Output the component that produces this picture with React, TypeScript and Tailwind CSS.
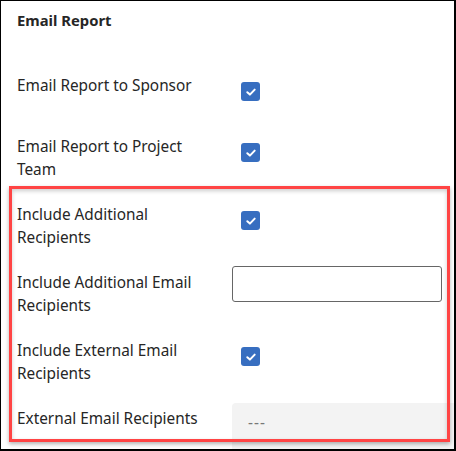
import React from "react";

function Check() {
    return (
        <div className="mt-[8px] ml-[9px] w-[19px] h-[19px] rounded-[3px] bg-[#376ec0] flex items-center justify-center">
            <svg width="12" height="12" viewBox="0 0 12 12" fill="none">
                <path d="M2.3 6.2 L4.9 8.6 L9.7 3.6" stroke="white" strokeWidth="2" strokeLinecap="round" strokeLinejoin="round" />
            </svg>
        </div>
    );
}

function Row({ label, h, children }: { label: string; h: string; children: React.ReactNode }) {
    return (
        <div className={`flex items-start ${h}`}>
            <div className="w-[190px] mr-[25px] shrink-0 leading-[23px]">{label}</div>
            {children}
        </div>
    );
}

export default function App() {
    return (
        <div className="relative w-[456px] h-[451px] overflow-hidden bg-white border-t border-l border-r-2 border-b-2 border-black text-[15.35px] text-[#262626] font-['Noto_Sans','Open_Sans',sans-serif]">
            <div className="pl-4">
                <div className="pt-[8px] h-[73px] font-bold text-[14.8px] leading-[23px]">Email Report</div>
                <Row label="Email Report to Sponsor" h="h-[61px]">
                    <Check />
                </Row>
                <Row label="Email Report to Project Team" h="h-[68px]">
                    <Check />
                </Row>
                <Row label="Include Additional Recipients" h="h-[68px]">
                    <Check />
                </Row>
                <Row label="Include Additional Email Recipients" h="h-[68px]">
                    <input className="-mt-[5px] w-[210px] h-[36px] border border-[#666] rounded-[3px] outline-none px-2" />
                </Row>
                <Row label="Include External Email Recipients" h="h-[68px]">
                    <Check />
                </Row>
                <Row label="External Email Recipients" h="h-[60px]">
                    <div className="-mt-[4px] flex-1 h-[60px] bg-[#f3f3f3] rounded-tl-[4px] pl-4 pt-[8px] text-[#777] tracking-[1px]">---</div>
                </Row>
            </div>
            {/* highlight annotation */}
            <div className="pointer-events-none absolute left-[8px] top-[185px] w-[441px] h-[256px] border-[3px] border-[#ff4444] shadow-[0_2px_4px_rgba(0,0,0,0.3),inset_0_2px_4px_rgba(0,0,0,0.2)]" />
        </div>
    );
}
